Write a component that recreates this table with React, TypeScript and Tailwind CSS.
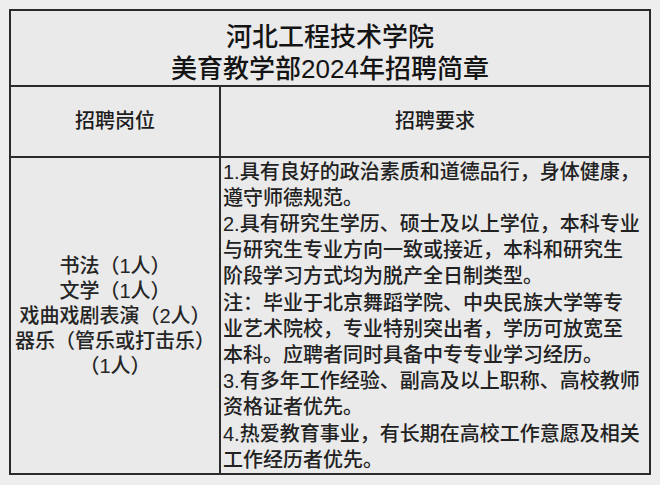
import React from "react";

const requirements = [
  "1.具有良好的政治素质和道德品行，身体健康，",
  "遵守师德规范。",
  "2.具有研究生学历、硕士及以上学位，本科专业",
  "与研究生专业方向一致或接近，本科和研究生",
  "阶段学习方式均为脱产全日制类型。",
  "注：毕业于北京舞蹈学院、中央民族大学等专",
  "业艺术院校，专业特别突出者，学历可放宽至",
  "本科。应聘者同时具备中专专业学习经历。",
  "3.有多年工作经验、副高及以上职称、高校教师",
  "资格证者优先。",
  "4.热爱教育事业，有长期在高校工作意愿及相关",
  "工作经历者优先。",
];

const positions = [
  "书法（1人）",
  "文学（1人）",
  "戏曲戏剧表演（2人）",
  "器乐（管乐或打击乐）",
  "（1人）",
];

const App: React.FC = () => {
  return (
    <div
      className="w-[660px] h-[485px] bg-[#eeeeee] pt-[9px] pl-[9px] font-medium"
      style={{ fontFamily: '"Liberation Sans", "Noto Sans CJK SC", sans-serif' }}
    >
      <div className="w-[642px] h-[466px] border-2 border-[#2b2b2b] bg-[#eaeaea] flex flex-col">
        {/* 标题 */}
        <div className="h-[74px] pt-[10px] text-center text-[26px] leading-[32px] text-[#141414]">
          <div>河北工程技术学院</div>
          <div>美育教学部2024年招聘简章</div>
        </div>

        {/* 表头 */}
        <div className="h-[73px] border-t-2 border-[#2b2b2b] grid grid-cols-[210px_1fr]">
          <div className="flex items-center justify-center text-[20px] text-[#1e1e1e] border-r-2 border-[#2b2b2b]">
            招聘岗位
          </div>
          <div className="flex items-center justify-center text-[20px] text-[#1e1e1e]">
            招聘要求
          </div>
        </div>

        {/* 内容 */}
        <div className="flex-1 border-t-2 border-[#2b2b2b] grid grid-cols-[210px_1fr]">
          <div className="flex flex-col items-center justify-center text-[20px] leading-[25px] text-[#252525] border-r-2 border-[#2b2b2b] pt-[2px]">
            {positions.map((p, i) => (
              <div key={i} className="whitespace-nowrap">
                {p}
              </div>
            ))}
          </div>
          <div className="pl-[2px] pt-[1px] text-[20px] leading-[26.2px] text-[#222222]">
            {requirements.map((line, i) => (
              <div key={i} className="whitespace-nowrap">
                {line}
              </div>
            ))}
          </div>
        </div>
      </div>
    </div>
  );
};

export default App;
